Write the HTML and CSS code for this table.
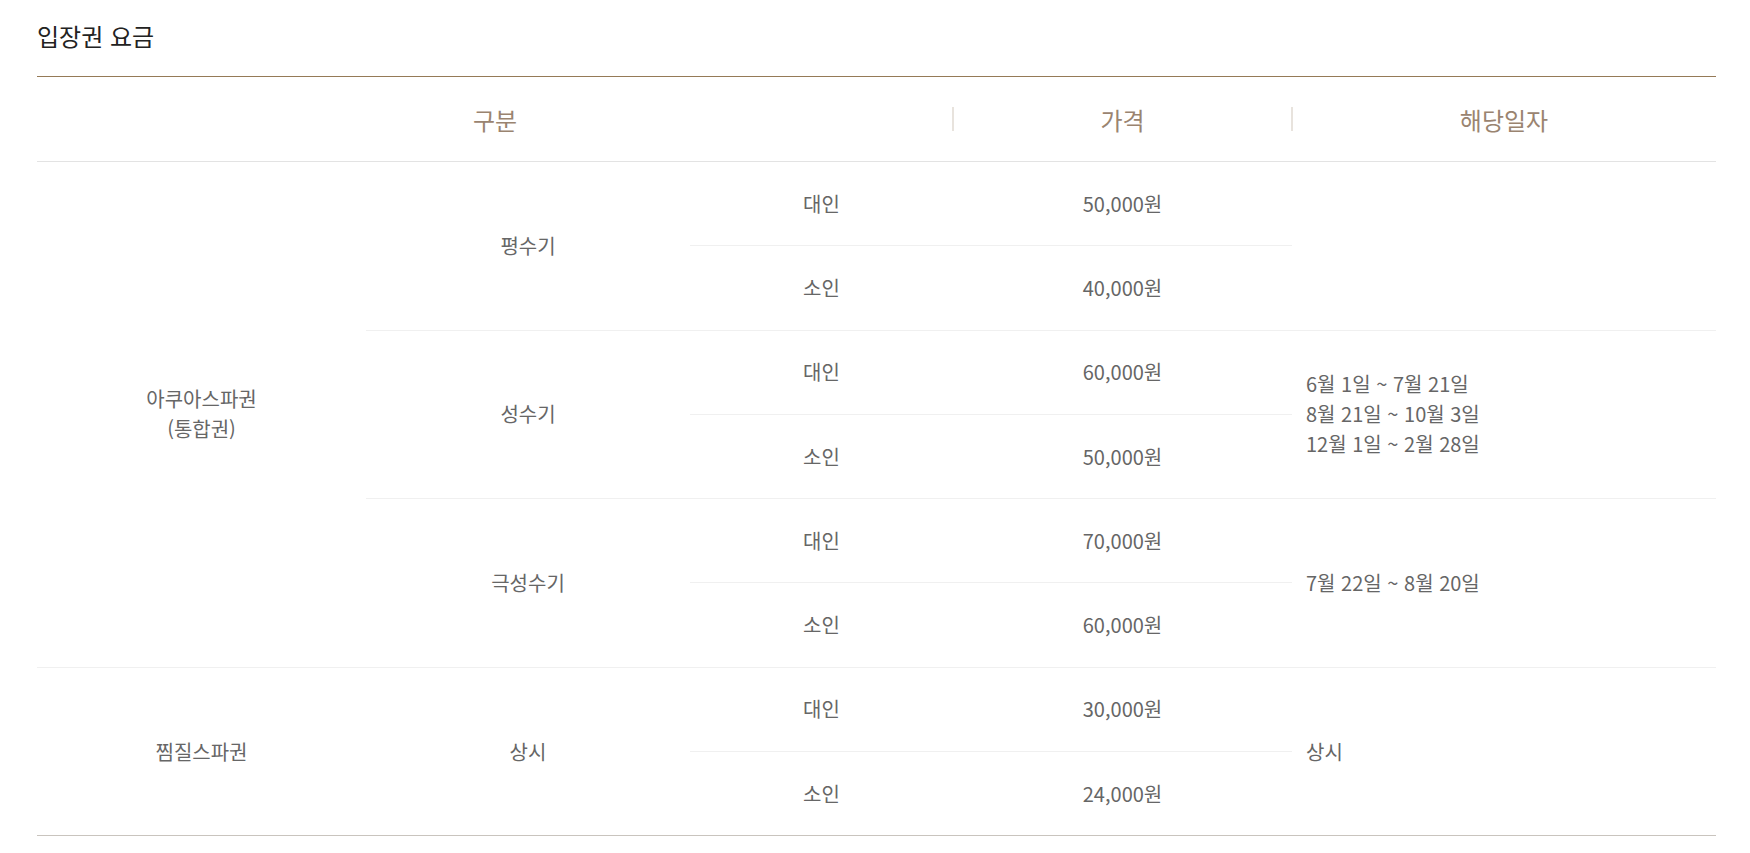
FILE: index.html
```html
<!DOCTYPE html>
<html lang="ko">
<head>
<meta charset="utf-8">
<title>입장권 요금</title>
<link rel="stylesheet" href="styles.css">
</head>
<body>
<div class="wrap">
  <h2 class="title">입장권 요금</h2>
  <table class="price">
    <colgroup>
      <col class="c1"><col class="c2"><col class="c3"><col class="c4"><col class="c5">
    </colgroup>
    <thead>
      <tr>
        <th colspan="3">구분</th>
        <th class="div">가격</th>
        <th class="div">해당일자</th>
      </tr>
    </thead>
    <tbody>
      <tr>
        <td rowspan="6" class="grp">아쿠아스파권<br>(통합권)</td>
        <td rowspan="2" class="grp">평수기</td>
        <td class="sub">대인</td>
        <td class="sub">50,000원</td>
        <td rowspan="2" class="date grp"></td>
      </tr>
      <tr>
        <td class="grp">소인</td>
        <td class="grp">40,000원</td>
      </tr>
      <tr>
        <td rowspan="2" class="grp">성수기</td>
        <td class="sub">대인</td>
        <td class="sub">60,000원</td>
        <td rowspan="2" class="date grp">6월 1일 ~ 7월 21일<br>8월 21일 ~ 10월 3일<br>12월 1일 ~ 2월 28일</td>
      </tr>
      <tr>
        <td class="grp">소인</td>
        <td class="grp">50,000원</td>
      </tr>
      <tr>
        <td rowspan="2" class="grp">극성수기</td>
        <td class="sub">대인</td>
        <td class="sub">70,000원</td>
        <td rowspan="2" class="date grp">7월 22일 ~ 8월 20일</td>
      </tr>
      <tr>
        <td class="grp">소인</td>
        <td class="grp">60,000원</td>
      </tr>
      <tr class="last">
        <td rowspan="2">찜질스파권</td>
        <td rowspan="2">상시</td>
        <td class="sub">대인</td>
        <td class="sub">30,000원</td>
        <td rowspan="2" class="date">상시</td>
      </tr>
      <tr class="last">
        <td>소인</td>
        <td>24,000원</td>
      </tr>
    </tbody>
  </table>
</div>
</body>
</html>
```
FILE: styles.css
```css
html, body {
  margin: 0;
  padding: 0;
  background: #fff;
}

body {
  font-family: "Noto Sans CJK KR", "Noto Sans", sans-serif;
  color: #666;
}

.wrap {
  padding: 20px 34px 0 37px;
}

.title {
  margin: 0 0 24px;
  font-size: 24px;
  line-height: 32px;
  font-weight: 400;
  color: #222;
}

.price {
  width: 100%;
  table-layout: fixed;
  border-collapse: collapse;
  border-top: 1px solid #957a57;
  border-bottom: 1px solid #c9c4be;
}

.c1 { width: 329px; }
.c2 { width: 324px; }
.c3 { width: 263px; }
.c4 { width: 339px; }
.c5 { width: 424px; }

.price th {
  position: relative;
  height: 84px;
  padding: 0;
  font-size: 24px;
  font-weight: 400;
  color: #9a8470;
  text-align: center;
  vertical-align: middle;
  border-bottom: 1px solid #e3e3e3;
}

.price th.div::before {
  content: "";
  position: absolute;
  left: -1px;
  top: 50%;
  width: 2px;
  height: 24px;
  margin-top: -12px;
  background: #e8e3dd;
}

.price td {
  height: 83.3px;
  padding: 0;
  font-size: 20px;
  line-height: 30px;
  text-align: center;
  vertical-align: middle;
  color: #666;
}

.price td.sub,
.price td.grp {
  border-bottom: 1px solid #f0f0f0;
}

.price td.date {
  text-align: left;
  padding-left: 14px;
}
```
